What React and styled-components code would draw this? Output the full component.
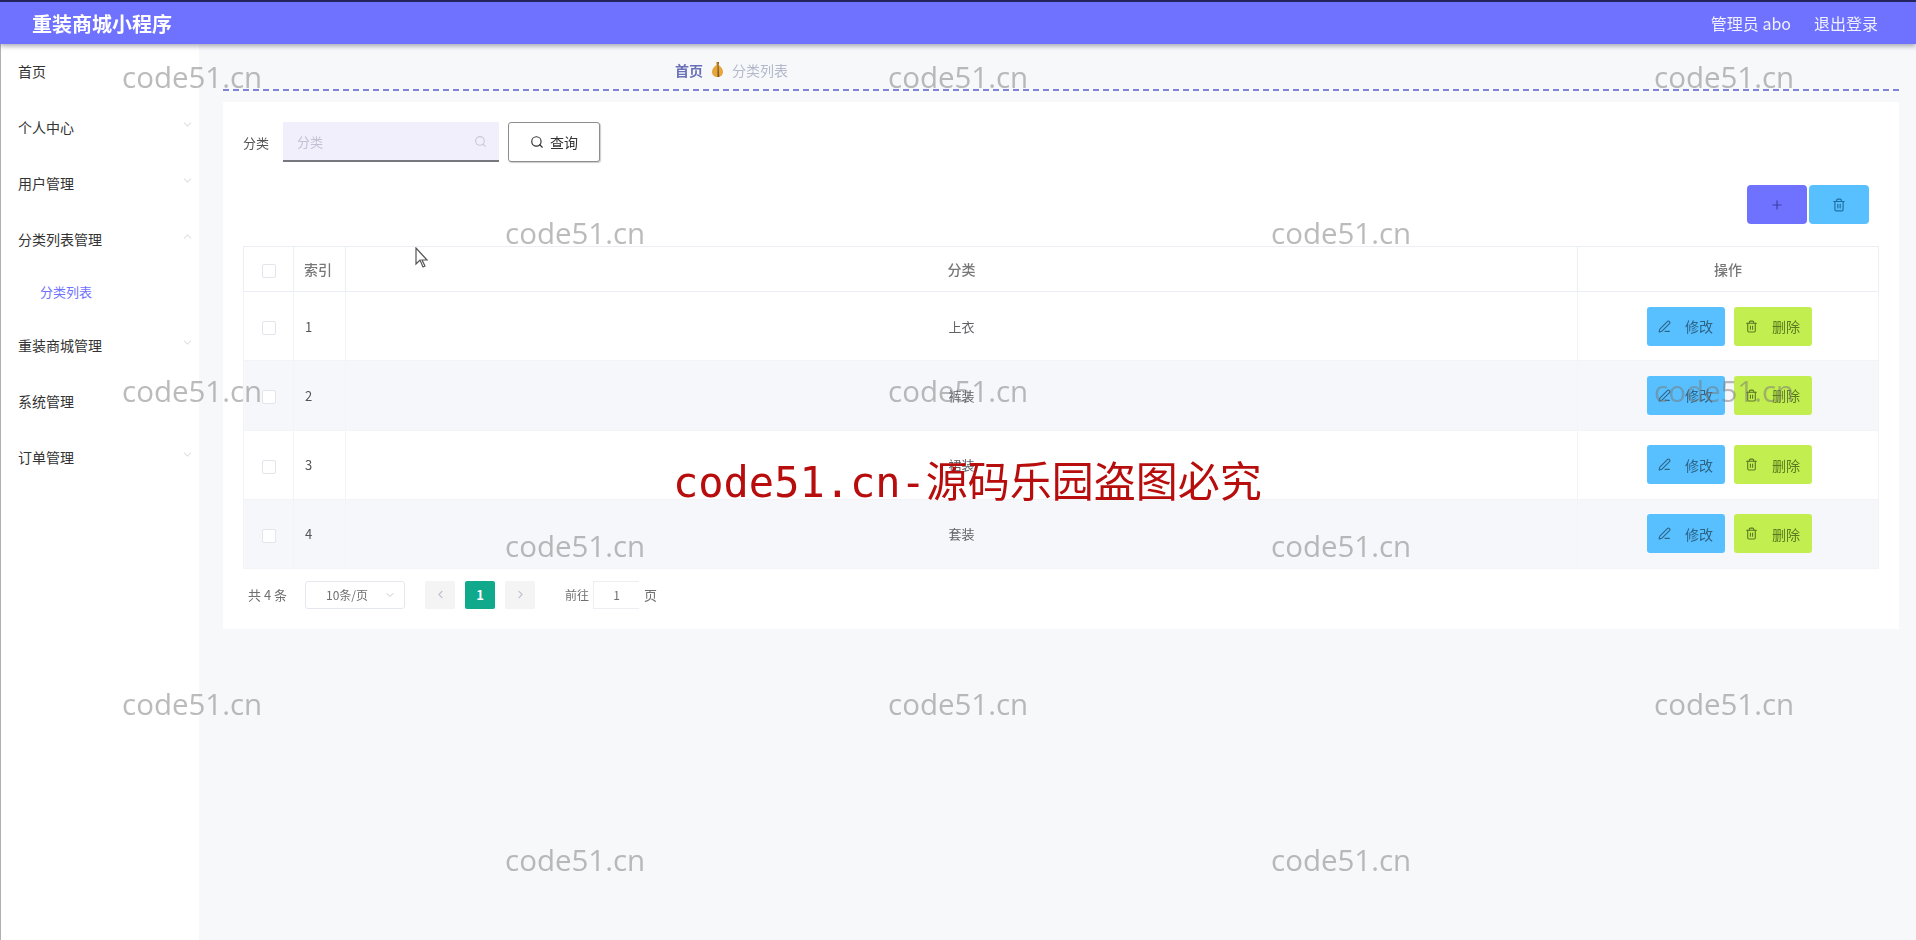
import React from 'react'
import styled, { createGlobalStyle } from 'styled-components'
import { ChevronDown, ChevronUp, ChevronLeft, ChevronRight, Search, Plus, Trash2, PenLine } from 'lucide-react'

const GlobalStyle = createGlobalStyle`
  html, body {
    margin: 0;
    padding: 0;
    height: 100%;
    overflow: hidden;
    background: #f6f8fa;
    font-family: "Noto Sans CJK SC", "Noto Sans", sans-serif;
  }
  * {
    box-sizing: border-box;
  }
`

const Stage = styled.div`
  position: relative;
  width: 100%;
  height: 100vh;
  overflow: hidden;
`

const Page = styled.div`
  display: flex;
  flex-direction: column;
  height: 100%;
  filter: blur(0.7px);
`

const TopBar = styled.header`
  flex: none;
  height: 44px;
  display: flex;
  align-items: center;
  justify-content: space-between;
  padding: 0 38px 0 32px;
  background: #6f71ff;
  border-top: 2px solid #23235e;
  box-shadow: 0 2px 5px rgba(60, 60, 90, 0.45);
  color: #fff;
  position: relative;
  z-index: 2;
`

const Brand = styled.div`
  font-size: 20px;
  font-weight: 700;
`

const UserBox = styled.div`
  display: flex;
  gap: 23px;
  font-size: 16px;
  color: #f0f0ff;
`

const Body = styled.div`
  flex: 1;
  display: flex;
  min-height: 0;
`

const Sidebar = styled.nav`
  flex: none;
  width: 199px;
  background: #fff;
  border-left: 1px solid #b0b0b0;
`

const MenuRow = styled.div`
  display: flex;
  align-items: center;
  justify-content: space-between;
  padding: 0 5px 3px ${(p) => (p.$sub ? '39px' : '17px')};
  height: ${(p) => (p.$sub ? '50px' : '56px')};
  font-size: ${(p) => (p.$sub ? '13px' : '14px')};
  color: ${(p) => (p.$sub ? '#6f71ff' : '#333')};
  svg {
    margin-top: -4px;
    color: #dfe2e6;
  }
`

const Main = styled.main`
  flex: 1;
  min-width: 0;
  padding: 0 17px 0 24px;
`

const Crumbs = styled.div`
  height: 47px;
  display: flex;
  align-items: center;
  gap: 9px;
  padding: 6px 0 0 452px;
  border-bottom: 2px dashed #8183d8;
  font-size: 14px;
`

const CrumbHome = styled.span`
  color: #6a70b8;
  font-weight: 700;
`

const CrumbCurrent = styled.span`
  color: #b4b8cc;
`

const Card = styled.section`
  margin-top: 11px;
  background: #fff;
  padding: 20px;
  height: 527px;
`

const SearchRow = styled.div`
  display: flex;
  align-items: center;
  height: 40px;
`

const SearchLabel = styled.label`
  width: 40px;
  font-size: 13px;
  color: #555;
`

const SearchField = styled.div`
  width: 216px;
  height: 40px;
  display: flex;
  align-items: center;
  justify-content: space-between;
  padding: 0 12px 0 14px;
  background: #f1effc;
  border-bottom: 2px solid #77777f;
  font-size: 13px;
  color: #c2c0d2;
  svg {
    color: #c9c9d4;
  }
`

const QueryButton = styled.button`
  width: 92px;
  height: 40px;
  margin-left: 9px;
  display: flex;
  align-items: center;
  justify-content: center;
  gap: 6px;
  background: #fff;
  border: 1px solid #8d8d8d;
  border-radius: 3px;
  box-shadow: 1px 1px 1px rgba(0, 0, 0, 0.2);
  font: inherit;
  font-size: 14px;
  color: #333;
`

const ToolRow = styled.div`
  display: flex;
  justify-content: flex-end;
  gap: 2px;
  margin: 23px 10px 22px 0;
`

const ToolButton = styled.button`
  width: 60px;
  height: 39px;
  display: flex;
  align-items: center;
  justify-content: center;
  border: none;
  border-radius: 4px;
  background: ${(p) => p.$bg};
  color: ${(p) => p.$fg};
`

const Table = styled.table`
  width: 100%;
  table-layout: fixed;
  border-collapse: collapse;
  font-size: 13px;
  color: #606266;
  th,
  td {
    border: 1px solid #ebeef5;
    text-align: center;
    padding: 0;
    font-weight: 400;
  }
`

const HeadRow = styled.tr`
  height: 45px;
  th {
    font-size: 14px;
    font-weight: 500;
    color: #777;
  }
`

const IndexHead = styled.th`
  && {
    text-align: left;
    padding-left: 10px;
  }
`

const DataRow = styled.tr`
  height: 69.25px;
  background: ${(p) => (p.$even ? '#f5f7fa' : '#fff')};
  td {
    border-color: ${(p) => (p.$even ? '#f2f4f8' : '#f1f3f7')};
  }
`

const IndexCell = styled.td`
  && {
    text-align: left;
    padding-left: 11px;
  }
  color: #555;
`

const Tick = styled.span`
  display: inline-block;
  width: 14px;
  height: 14px;
  vertical-align: middle;
  border: 1px solid #e3e5ea;
  border-radius: 2px;
  background: #fff;
`

const Actions = styled.div`
  display: flex;
  justify-content: center;
  gap: 9px;
  padding-left: 2px;
`

const ActionButton = styled.button`
  width: 78px;
  height: 39px;
  display: flex;
  align-items: center;
  justify-content: center;
  gap: 14px;
  padding: 0;
  border: none;
  border-radius: 3px;
  font: inherit;
  font-size: 14px;
  background: ${(p) => p.$bg};
  color: ${(p) => p.$fg};
`

const Pager = styled.div`
  display: flex;
  align-items: center;
  height: 29px;
  margin-top: 11px;
  padding-left: 5px;
  font-size: 13px;
  color: #707070;
`

const SizeSelect = styled.div`
  width: 100px;
  height: 28px;
  margin-left: 18px;
  display: flex;
  align-items: center;
  justify-content: space-between;
  padding: 0 8px 0 20px;
  border: 1px solid #e4e7ed;
  border-radius: 3px;
  font-size: 12px;
  svg {
    color: #c6c9d0;
  }
`

const PageBtn = styled.div`
  width: 30px;
  height: 28px;
  display: flex;
  align-items: center;
  justify-content: center;
  border-radius: 2px;
  margin-left: ${(p) => p.$gap};
  font-weight: ${(p) => (p.$active ? 700 : 400)};
  background: ${(p) => (p.$active ? '#10a98c' : '#f4f4f5')};
  color: ${(p) => (p.$active ? '#fff' : '#c0c4cc')};
`

const JumpLabel = styled.span`
  margin-left: ${(p) => p.$gap};
  font-size: 12px;
`

const JumpInput = styled.div`
  width: 46px;
  height: 28px;
  margin: 0 5px 0 4px;
  display: flex;
  align-items: center;
  justify-content: center;
  border: 1px solid #eceef2;
  border-right: none;
  font-size: 12px;
`

const Watermark = styled.div`
  position: absolute;
  left: ${(p) => p.$x}px;
  top: ${(p) => p.$y}px;
  font-family: "Open Sans", "Noto Sans", sans-serif;
  font-size: 29.5px;
  line-height: 36px;
  color: rgba(120, 120, 120, 0.5);
  pointer-events: none;
  white-space: nowrap;
`

const Stamp = styled.div`
  position: absolute;
  left: 673px;
  top: 453px;
  font-family: "DejaVu Sans Mono", "Noto Sans CJK SC", monospace;
  font-size: 42px;
  line-height: 60px;
  color: #b80d0d;
  white-space: nowrap;
`

const Cursor = styled.svg`
  position: absolute;
  left: 415px;
  top: 247px;
`

const menus = [
  { name: '首页' },
  { name: '个人中心', arrow: 'down' },
  { name: '用户管理', arrow: 'down' },
  { name: '分类列表管理', arrow: 'up' },
  { name: '分类列表', sub: true },
  { name: '重装商城管理', arrow: 'down' },
  { name: '系统管理' },
  { name: '订单管理', arrow: 'down' },
]

const rows = ['上衣', '裤装', '裙装', '套装']

const marks = [
  [122, 59], [888, 59], [1654, 59],
  [505, 215], [1271, 215],
  [122, 373], [888, 373], [1654, 373],
  [505, 528], [1271, 528],
  [122, 686], [888, 686], [1654, 686],
  [505, 842], [1271, 842],
]

const GoldIcon = () => (
  <svg width="11" height="15" viewBox="0 0 11 15">
    <path d="M4 0h3l-.5 3C9 4.500 11 7 11 10c0 3-2.500 5-5.500 5S0 13 0 10c0-3 2-5.500 4.500-7z" fill="#e8a53a" />
    <path d="M5.500 0h1.500l-.5 3 .8 12H5.500z" fill="#7a5a2a" />
  </svg>
)

const App = () => {
  return (
    <Stage>
      <GlobalStyle />
      <Page>
        <TopBar>
          <Brand>重装商城小程序</Brand>
          <UserBox>
            <span>管理员 abo</span>
            <span>退出登录</span>
          </UserBox>
        </TopBar>
        <Body>
          <Sidebar>
            {menus.map((m) => (
              <MenuRow key={m.name} $sub={m.sub}>
                <span>{m.name}</span>
                {m.arrow === 'down' && <ChevronDown size={13} />}
                {m.arrow === 'up' && <ChevronUp size={13} />}
              </MenuRow>
            ))}
          </Sidebar>
          <Main>
            <Crumbs>
              <CrumbHome>首页</CrumbHome>
              <GoldIcon />
              <CrumbCurrent>分类列表</CrumbCurrent>
            </Crumbs>
            <Card>
              <SearchRow>
                <SearchLabel>分类</SearchLabel>
                <SearchField>
                  <span>分类</span>
                  <Search size={13} />
                </SearchField>
                <QueryButton>
                  <Search size={14} />
                  查询
                </QueryButton>
              </SearchRow>
              <ToolRow>
                <ToolButton $bg="#6f71ff" $fg="#3d3fa8">
                  <Plus size={14} />
                </ToolButton>
                <ToolButton $bg="#58c0ff" $fg="#1f6f9f">
                  <Trash2 size={14} />
                </ToolButton>
              </ToolRow>
              <Table>
                <colgroup>
                  <col style={{ width: 50 }} />
                  <col style={{ width: 52 }} />
                  <col />
                  <col style={{ width: 301 }} />
                </colgroup>
                <thead>
                  <HeadRow>
                    <th><Tick /></th>
                    <IndexHead>索引</IndexHead>
                    <th>分类</th>
                    <th>操作</th>
                  </HeadRow>
                </thead>
                <tbody>
                  {rows.map((name, i) => (
                    <DataRow key={name} $even={i % 2 === 1}>
                      <td><Tick /></td>
                      <IndexCell>{i + 1}</IndexCell>
                      <td>{name}</td>
                      <td>
                        <Actions>
                          <ActionButton $bg="#58c0ff" $fg="#2d6488">
                            <PenLine size={13} />
                            修改
                          </ActionButton>
                          <ActionButton $bg="#c3ee4f" $fg="#5a7a22">
                            <Trash2 size={13} />
                            删除
                          </ActionButton>
                        </Actions>
                      </td>
                    </DataRow>
                  ))}
                </tbody>
              </Table>
              <Pager>
                <span>共 4 条</span>
                <SizeSelect>
                  <span>10条/页</span>
                  <ChevronDown size={12} />
                </SizeSelect>
                <PageBtn $gap="20px"><ChevronLeft size={13} /></PageBtn>
                <PageBtn $gap="10px" $active>1</PageBtn>
                <PageBtn $gap="10px"><ChevronRight size={13} /></PageBtn>
                <JumpLabel $gap="30px">前往</JumpLabel>
                <JumpInput>1</JumpInput>
                <span>页</span>
              </Pager>
            </Card>
          </Main>
        </Body>
      </Page>
      {marks.map(([x, y]) => (
        <Watermark key={`${x}-${y}`} $x={x} $y={y}>code51.cn</Watermark>
      ))}
      <Stamp>code51.cn-源码乐园盗图必究</Stamp>
      <Cursor width="14" height="22" viewBox="0 0 14 22">
        <path d="M1 1v16l4-4 3 7 2-1-3-6h5z" fill="#fff" stroke="#555" strokeWidth="1.200" />
      </Cursor>
    </Stage>
  )
}

export default App
